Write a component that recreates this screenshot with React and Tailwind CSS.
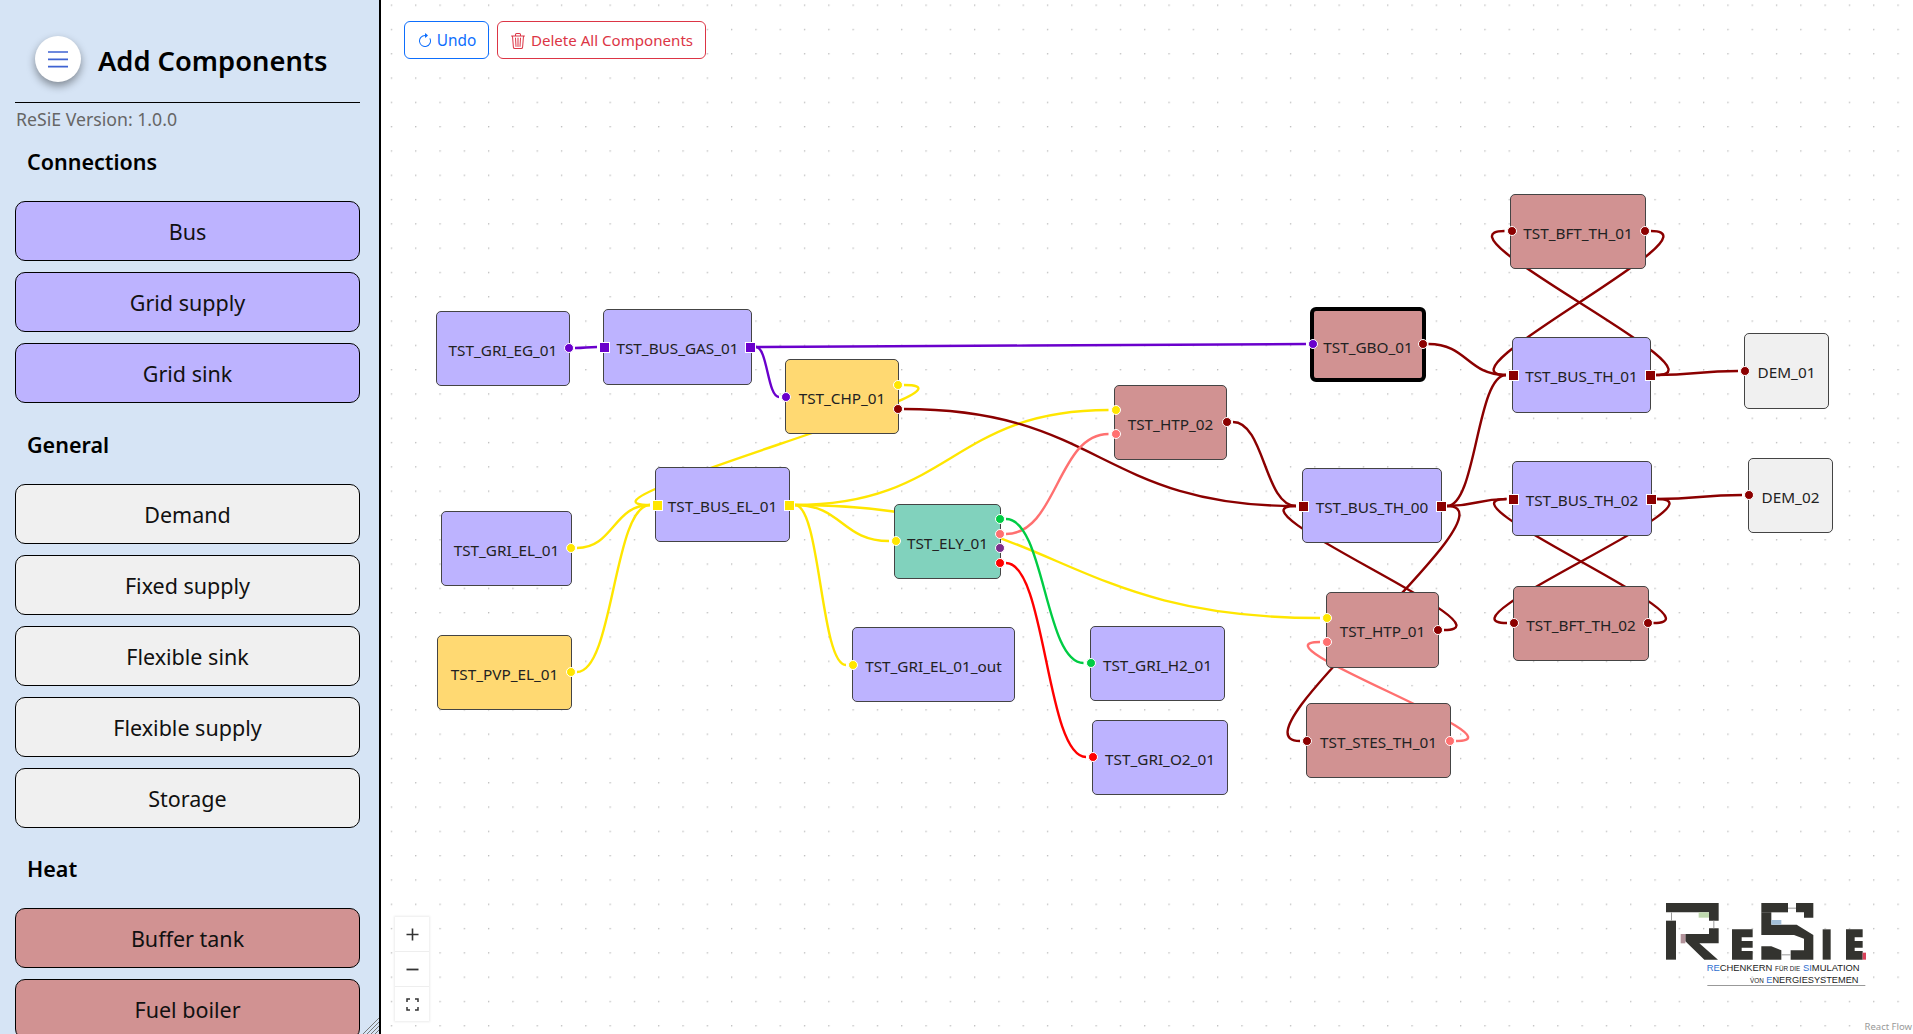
import React from "react";

const F = { fontFamily: '"Noto Sans", "Open Sans", sans-serif' };
const OX = 381;
const PUR = "#6a00cc", YEL = "#ffe600", DRK = "#8b0000", PNK = "#ff7070", GRN = "#00cc44", RED = "#ff0000", VIO = "#7b2d8b";
const LILAC = "bg-[#bdb3ff]", HEAT = "bg-[#d19292]", SUN = "bg-[#ffd972]", TEAL = "bg-[#81d2bd]", GRAY = "bg-[#f0f0f0]";

const nodes = [
  ["TST_GRI_EG_01", 436, 311, 134, 75, LILAC],
  ["TST_BUS_GAS_01", 603, 309, 149, 76, LILAC],
  ["TST_CHP_01", 785, 359, 114, 75, SUN],
  ["TST_BUS_EL_01", 655, 467, 135, 75, LILAC],
  ["TST_GRI_EL_01", 441, 511, 131, 75, LILAC],
  ["TST_PVP_EL_01", 437, 635, 135, 75, SUN],
  ["TST_ELY_01", 894, 504, 107, 75, TEAL],
  ["TST_GRI_EL_01_out", 852, 627, 163, 75, LILAC],
  ["TST_HTP_02", 1114, 385, 113, 75, HEAT],
  ["TST_BUS_TH_00", 1302, 468, 140, 75, LILAC],
  ["TST_GRI_H2_01", 1090, 626, 135, 75, LILAC],
  ["TST_GRI_O2_01", 1092, 720, 136, 75, LILAC],
  ["TST_HTP_01", 1326, 592, 113, 76, HEAT],
  ["TST_STES_TH_01", 1306, 703, 145, 75, HEAT],
  ["TST_BFT_TH_01", 1510, 194, 136, 75, HEAT],
  ["TST_GBO_01", 1310, 307, 116, 75, HEAT, true],
  ["TST_BUS_TH_01", 1512, 337, 139, 76, LILAC],
  ["DEM_01", 1744, 333, 85, 76, GRAY],
  ["TST_BUS_TH_02", 1512, 461, 140, 75, LILAC],
  ["DEM_02", 1748, 458, 85, 75, GRAY],
  ["TST_BFT_TH_02", 1513, 586, 136, 75, HEAT],
];

const H = {
  egO: [569, 348, PUR], gasI: [604, 347, PUR, 1], gasO: [750, 347, PUR, 1], chpI: [786, 397, PUR],
  chpY: [898, 385, YEL], chpR: [898, 409, DRK], elI: [657, 505, YEL, 1], elO: [789, 505, YEL, 1],
  griElO: [571, 548, YEL], pvpO: [571, 672, YEL], elyI: [896, 541, YEL],
  elyG: [1000, 519, GRN], elyP: [1000, 534, PNK], elyV: [1000, 548, VIO], elyR: [1000, 563, RED],
  h2I: [1115.5, 410, YEL], h2P: [1115.5, 434, PNK], h2O: [1227, 422, DRK],
  th0I: [1303, 506, DRK, 1], th0O: [1441, 506, DRK, 1],
  h1Y: [1327, 618, YEL], h1P: [1327, 642, PNK], h1O: [1438, 630, DRK],
  stI: [1307, 741, DRK], stO: [1450, 741, PNK], gH2: [1090.5, 663, GRN], gO2: [1093, 757, RED], outI: [853, 665, YEL],
  gboI: [1313, 344, PUR], gboO: [1422.5, 344, DRK],
  b1I: [1511.5, 231, DRK], b1O: [1645, 231, DRK], t1I: [1513, 375, DRK, 1], t1O: [1650, 375, DRK, 1], d1: [1745, 371, DRK],
  t2I: [1513.5, 499, DRK, 1], t2O: [1651, 499, DRK, 1], d2: [1749, 495, DRK], b2I: [1514, 623, DRK], b2O: [1647.5, 623, DRK],
};

const edges = [
  ["egO", "gasI"], ["gasO", "gboI"], ["gasO", "chpI"],
  ["griElO", "elI"], ["pvpO", "elI"], ["chpY", "elI"], ["elO", "elyI"], ["elO", "h2I"], ["elO", "h1Y"], ["elO", "outI"],
  ["chpR", "th0I"], ["h2O", "th0I"], ["h1O", "th0I"], ["th0O", "stI"], ["th0O", "t1I"], ["th0O", "t2I"],
  ["gboO", "t1I"], ["t1O", "d1"], ["t1O", "b1I"], ["b1O", "t1I"], ["t2O", "d2"], ["t2O", "b2I"], ["b2O", "t2I"],
  ["elyP", "h2P"], ["stO", "h1P"], ["elyG", "gH2"], ["elyR", "gO2"],
];

const sidebar = [
  ["Connections", LILAC, ["Bus", "Grid supply", "Grid sink"], ""],
  ["General", GRAY, ["Demand", "Fixed supply", "Flexible sink", "Flexible supply", "Storage"], "mt-[17px]"],
  ["Heat", HEAT, ["Buffer tank", "Fuel boiler"], "mt-[16px]"],
];

function edgePath(a, b) {
  const sx = H[a][0] + 6, sy = H[a][1];
  const tx = H[b][0] - 7, ty = H[b][1];
  const d = tx - sx;
  const c = d >= 0 ? 0.5 * d : 6.25 * Math.sqrt(-d);
  return `M${sx - OX},${sy} C${sx + c - OX},${sy} ${tx - c - OX},${ty} ${tx - OX},${ty}`;
}

function Logo() {
  const D = "#33332f";
  return (
    <svg className="absolute" style={{ left: 1640 - OX, top: 880 }} width="273" height="154" viewBox="0 0 819 462">
      <g fill={D}>
        <polygon points="78,69 236,69 236,122 207,122 207,97 78,97" />
        <rect x="78" y="122" width="30" height="117" />
        <polygon points="136,162 207,162 207,145 236,145 236,190 178,190 234,239 193,239 136,184" />
        <polygon points="276,148 338,148 338,172 305,172 305,183 338,183 338,203 305,203 305,213 338,213 338,239 276,239" />
        <rect x="364" y="69" width="80" height="28" />
        <polygon points="468,69 520,69 520,113 492,113 492,97 468,97" />
        <polygon points="364,97 394,97 394,134 470,134 520,165 520,239 452,239 452,211 492,211 492,176 462,165 364,165" />
        <polygon points="364,199 394,199 424,211 424,239 364,239" />
        <rect x="548" y="148" width="24" height="91" />
        <polygon points="618,148 668,148 668,172 644,172 644,183 668,183 668,203 644,203 644,213 668,213 668,239 618,239" />
      </g>
      <g fill="#999">
        <rect x="93" y="97" width="3" height="25" />
        <rect x="220" y="122" width="3" height="23" />
        <rect x="444" y="83" width="24" height="3" />
        <rect x="424" y="223" width="28" height="3" />
      </g>
      <rect x="176" y="97" width="31" height="16" fill="#bfd9ae" />
      <rect x="122" y="162" width="14" height="28" fill="#b2929a" />
      <rect x="394" y="120" width="30" height="14" fill="#a3bfd9" />
      <rect x="668" y="218" width="10" height="21" fill="#d9415a" />
      <g fontFamily="'Liberation Sans', Arial, sans-serif" fill="#222">
        <text x="200" y="274" fontSize="28.2">
          <tspan fill="#2f6fd0">RE</tspan>CHENKERN <tspan fontSize="19">FÜR DIE</tspan> <tspan fill="#2f6fd0">SI</tspan>MULATION
        </text>
        <text x="330" y="309" fontSize="27.7">
          <tspan fontSize="19">VON</tspan> <tspan fill="#2f6fd0">E</tspan>NERGIESYSTEMEN
        </text>
      </g>
      <rect x="202" y="315" width="474" height="3" fill="#999" />
    </svg>
  );
}

function Side() {
  return (
    <aside className="relative h-full w-[381px] shrink-0 overflow-hidden border-r-2 border-black bg-[#d6e4f5] pr-[19px] pl-[15px]">
      <div className="flex h-[103px] items-center border-b border-black pt-[16px] pl-[20px]">
        <button className="flex h-[46px] w-[46px] items-center justify-center rounded-full bg-white shadow-[0_4px_8px_rgba(0,0,0,0.4)]">
          <svg width="20" height="17" viewBox="0 0 20 17" fill="none" stroke="#3f63d2" strokeWidth="1.7">
            <path d="M0 1H20M0 8.3H20M0 15.6H20" />
          </svg>
        </button>
        <h1 className="mt-[5px] ml-[17px] text-[27.3px] font-semibold text-black">Add Components</h1>
      </div>
      <div className="flex h-[34px] items-center pb-[1px] pl-[1px] text-[17.7px] text-[#666]">ReSiE Version: 1.0.0</div>
      {sidebar.map(([title, color, items, m]) => (
        <section key={title} className={m}>
          <h2 className="flex h-[50px] items-center pl-[12px] text-[21.5px] font-semibold text-black">{title}</h2>
          <div className="mt-[14px] flex flex-col gap-[11px]">
            {items.map((t) => (
              <button key={t} className={`flex h-[60px] w-full items-center justify-center rounded-[10px] border border-black pt-[2px] text-[21.5px] text-[#111] ${color}`}>
                {t}
              </button>
            ))}
          </div>
        </section>
      ))}
      <svg className="absolute right-0 bottom-0" width="16" height="16" viewBox="0 0 16 16" stroke="#777" strokeWidth="1">
        <path d="M0 16L16 0M4 16L16 4M8 16L16 8M12 16L16 12" />
      </svg>
    </aside>
  );
}

function Canvas() {
  return (
    <main className="relative h-full flex-1 overflow-hidden bg-white">
      <svg className="absolute inset-0 h-full w-full">
        <defs>
          <pattern id="dots" patternUnits="userSpaceOnUse" x="9.8" y="4.5" width="24.3" height="24.3">
            <circle cx="0.7" cy="0.7" r="0.7" fill="#adadad" />
          </pattern>
        </defs>
        <rect width="100%" height="100%" fill="url(#dots)" />
        {edges.map(([a, b]) => (
          <path key={a + b} d={edgePath(a, b)} fill="none" stroke={H[a][2]} strokeWidth="2.4" />
        ))}
      </svg>

      <div className="relative z-10 flex gap-[8px] pt-[21px] pl-[23px]">
        <button className="flex h-[38px] w-[85px] items-center justify-center gap-[4px] rounded-[6px] border border-[#0d6efd] bg-white pt-[1px] text-[15.4px] text-[#0d6efd]">
          <svg width="16" height="16" viewBox="0 0 16 16" fill="currentColor">
            <path fillRule="evenodd" d="M8 3a5 5 0 1 0 4.546 2.914.5.5 0 0 1 .908-.417A6 6 0 1 1 8 2z" />
            <path d="M8 4.466V.534a.25.25 0 0 1 .41-.192l2.36 1.966c.12.1.12.284 0 .384L8.41 4.658A.25.25 0 0 1 8 4.466" />
          </svg>
          Undo
        </button>
        <button className="flex h-[38px] w-[209px] items-center justify-center gap-[5px] rounded-[6px] border border-[#dc3545] bg-white pt-[1px] text-[15.1px] text-[#dc3545]">
          <svg width="16" height="16" viewBox="0 0 16 16" fill="currentColor">
            <path d="M6.5 1h3a.5.5 0 0 1 .5.5v1H6v-1a.5.5 0 0 1 .5-.5M11 2.5v-1A1.5 1.5 0 0 0 9.5 0h-3A1.5 1.5 0 0 0 5 1.5v1H1.5a.5.5 0 0 0 0 1h.538l.853 10.66A2 2 0 0 0 4.885 16h6.23a2 2 0 0 0 1.994-1.84l.853-10.66h.538a.5.5 0 0 0 0-1zm1.958 1-.846 10.58a1 1 0 0 1-.997.92h-6.23a1 1 0 0 1-.997-.92L3.042 3.5zm-7.487 1a.5.5 0 0 1 .528.47l.5 8.5a.5.5 0 0 1-.998.06L5 5.03a.5.5 0 0 1 .47-.53Zm5.058 0a.5.5 0 0 1 .47.53l-.5 8.5a.5.5 0 1 1-.998-.06l.5-8.5a.5.5 0 0 1 .528-.47M8 4.5a.5.5 0 0 1 .5.5v8.5a.5.5 0 0 1-1 0V5a.5.5 0 0 1 .5-.5" />
          </svg>
          Delete All Components
        </button>
      </div>

      {nodes.map(([name, x, y, w, h, color, sel]) => (
        <div
          key={name}
          className={`absolute flex items-center justify-center text-[15.3px] text-[#222] ${color} ${sel ? "rounded-[6px] border-[4px] border-black pt-[5px]" : "rounded-[5px] border border-[#444] pt-[3px]"}`}
          style={{ left: x - OX, top: y, width: w, height: h }}
        >
          {name}
        </div>
      ))}

      {Object.entries(H).map(([k, [x, y, c, sq]]) => (
        <span
          key={k}
          className={`absolute z-20 border border-white ${sq ? "h-[11px] w-[11px]" : "h-[10px] w-[10px] rounded-full"}`}
          style={{ left: x - OX - (sq ? 5.5 : 5), top: y - (sq ? 5.5 : 5), backgroundColor: c }}
        />
      ))}

      <div className="absolute top-[917px] left-[14px] z-20 flex w-[34px] flex-col bg-white shadow-[0_0_2px_1px_rgba(0,0,0,0.08)]">
        <button className="flex h-[35px] items-center justify-center border-b border-[#eee]">
          <svg width="13" height="13" viewBox="0 0 13 13" stroke="#333" strokeWidth="1.6"><path d="M6.5 0.5V12.5M0.5 6.5H12.5" /></svg>
        </button>
        <button className="flex h-[35px] items-center justify-center border-b border-[#eee]">
          <svg width="13" height="13" viewBox="0 0 13 13" stroke="#333" strokeWidth="1.8"><path d="M0.5 6.5H12.5" /></svg>
        </button>
        <button className="flex h-[34px] items-center justify-center">
          <svg width="13" height="13" viewBox="0 0 13 13" fill="none" stroke="#333" strokeWidth="1.5"><path d="M1 4V1H4M9 1H12V4M12 9V12H9M4 12H1V9" /></svg>
        </button>
      </div>

      <Logo />
      <div className="absolute right-0 bottom-0 z-20 bg-white/50 pr-[1px] pl-[2px] text-[9.5px] text-[#999]">React Flow</div>
    </main>
  );
}

export default function App() {
  return (
    <div className="flex h-[1034px] w-[1913px] overflow-hidden" style={F}>
      <Side />
      <Canvas />
    </div>
  );
}
